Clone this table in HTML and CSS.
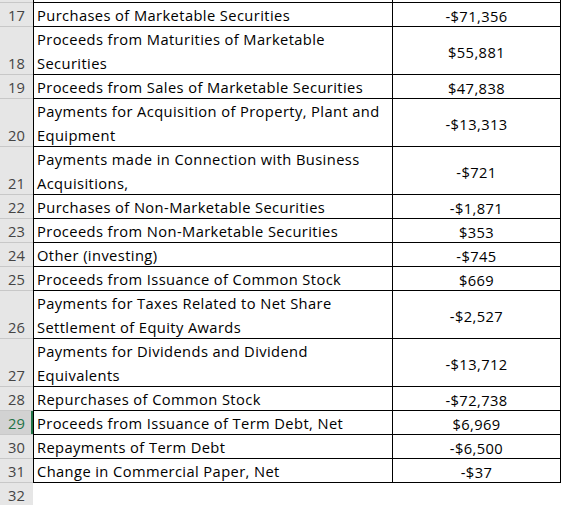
FILE: index.html
```html
<!DOCTYPE html>
<html lang="en">

<head>
  <title>Cash Flow - Investing and Financing</title>
  <meta charset="utf-8">
  <link rel="stylesheet" href="styles.css">
</head>

<body>
  <div class="sheet">
    <!-- bottom edge of row 16 -->
    <div class="row stub">
      <div class="num"></div>
      <div class="label"></div>
      <div class="value"></div>
    </div>
    <div class="row">
      <div class="num"><span>17</span></div>
      <div class="label"><span>Purchases of Marketable Securities</span></div>
      <div class="value">-$71,356</div>
    </div>
    <div class="row tall">
      <div class="num"><span>18</span></div>
      <div class="label"><span>Proceeds from Maturities of Marketable<br>Securities</span></div>
      <div class="value">$55,881</div>
    </div>
    <div class="row">
      <div class="num"><span>19</span></div>
      <div class="label"><span>Proceeds from Sales of Marketable Securities</span></div>
      <div class="value">$47,838</div>
    </div>
    <div class="row tall">
      <div class="num"><span>20</span></div>
      <div class="label"><span>Payments for Acquisition of Property, Plant and<br>Equipment</span></div>
      <div class="value">-$13,313</div>
    </div>
    <div class="row tall">
      <div class="num"><span>21</span></div>
      <div class="label"><span>Payments made in Connection with Business<br>Acquisitions,</span></div>
      <div class="value">-$721</div>
    </div>
    <div class="row">
      <div class="num"><span>22</span></div>
      <div class="label"><span>Purchases of Non-Marketable Securities</span></div>
      <div class="value">-$1,871</div>
    </div>
    <div class="row">
      <div class="num"><span>23</span></div>
      <div class="label"><span>Proceeds from Non-Marketable Securities</span></div>
      <div class="value">$353</div>
    </div>
    <div class="row">
      <div class="num"><span>24</span></div>
      <div class="label"><span>Other (investing)</span></div>
      <div class="value">-$745</div>
    </div>
    <div class="row">
      <div class="num"><span>25</span></div>
      <div class="label"><span>Proceeds from Issuance of Common Stock</span></div>
      <div class="value">$669</div>
    </div>
    <div class="row tall">
      <div class="num"><span>26</span></div>
      <div class="label"><span>Payments for Taxes Related to Net Share<br>Settlement of Equity Awards</span></div>
      <div class="value">-$2,527</div>
    </div>
    <div class="row tall">
      <div class="num"><span>27</span></div>
      <div class="label"><span>Payments for Dividends and Dividend<br>Equivalents</span></div>
      <div class="value">-$13,712</div>
    </div>
    <div class="row">
      <div class="num"><span>28</span></div>
      <div class="label"><span>Repurchases of Common Stock</span></div>
      <div class="value">-$72,738</div>
    </div>
    <!-- active row -->
    <div class="row selected">
      <div class="num"><span>29</span></div>
      <div class="label"><span>Proceeds from Issuance of Term Debt, Net</span></div>
      <div class="value">$6,969</div>
    </div>
    <div class="row">
      <div class="num"><span>30</span></div>
      <div class="label"><span>Repayments of Term Debt</span></div>
      <div class="value">-$6,500</div>
    </div>
    <div class="row">
      <div class="num"><span>31</span></div>
      <div class="label"><span>Change in Commercial Paper, Net</span></div>
      <div class="value">-$37</div>
    </div>
    <div class="row blank">
      <div class="num"><span>32</span></div>
      <div class="label"></div>
      <div class="value"></div>
    </div>
  </div>
</body>

</html>
```

FILE: styles.css
```css
* {
  box-sizing: border-box;
}

body {
  margin: 0;
  background-color: #ffffff;
  font-family: "Open Sans", "Noto Sans", sans-serif;
  font-size: 14.7px;
  letter-spacing: 0.4px;
  color: #000000;
}

.sheet {
  width: 561px;
}

/* one spreadsheet row */
.row {
  display: flex;
  height: 24px;
}

.row.tall {
  height: 48px;
}

.row.stub {
  height: 2px;
}

/* row header */
.num {
  width: 33px;
  background-color: #e6e6e6;
  border-top: 1px solid #c8c8c8;
  color: #444444;
  letter-spacing: 0;
  display: flex;
  align-items: flex-end;
  justify-content: center;
  line-height: 24px;
}

.num span,
.label span {
  display: block;
  margin-bottom: -1px;
}

.label {
  width: 359px;
  border-top: 1px solid #000000;
  border-left: 1px solid #000000;
  padding-left: 3px;
  display: flex;
  align-items: flex-end;
  line-height: 24px;
  white-space: nowrap;
}

.value {
  width: 169px;
  border-top: 1px solid #000000;
  border-left: 1px solid #000000;
  border-right: 1px solid #000000;
  padding-top: 2px;
  display: flex;
  align-items: center;
  justify-content: center;
  line-height: 24px;
}

.stub .num,
.stub .label,
.stub .value {
  border-top: none;
}

/* empty row below the table */
.blank .label,
.blank .value {
  border-left: none;
  border-right: none;
}

.blank .value {
  width: 170px;
}

/* active cell row */
.selected .num {
  background-color: #d2d2d2;
  color: #217346;
  box-shadow: inset -2px 0 0 #217346;
}
```
